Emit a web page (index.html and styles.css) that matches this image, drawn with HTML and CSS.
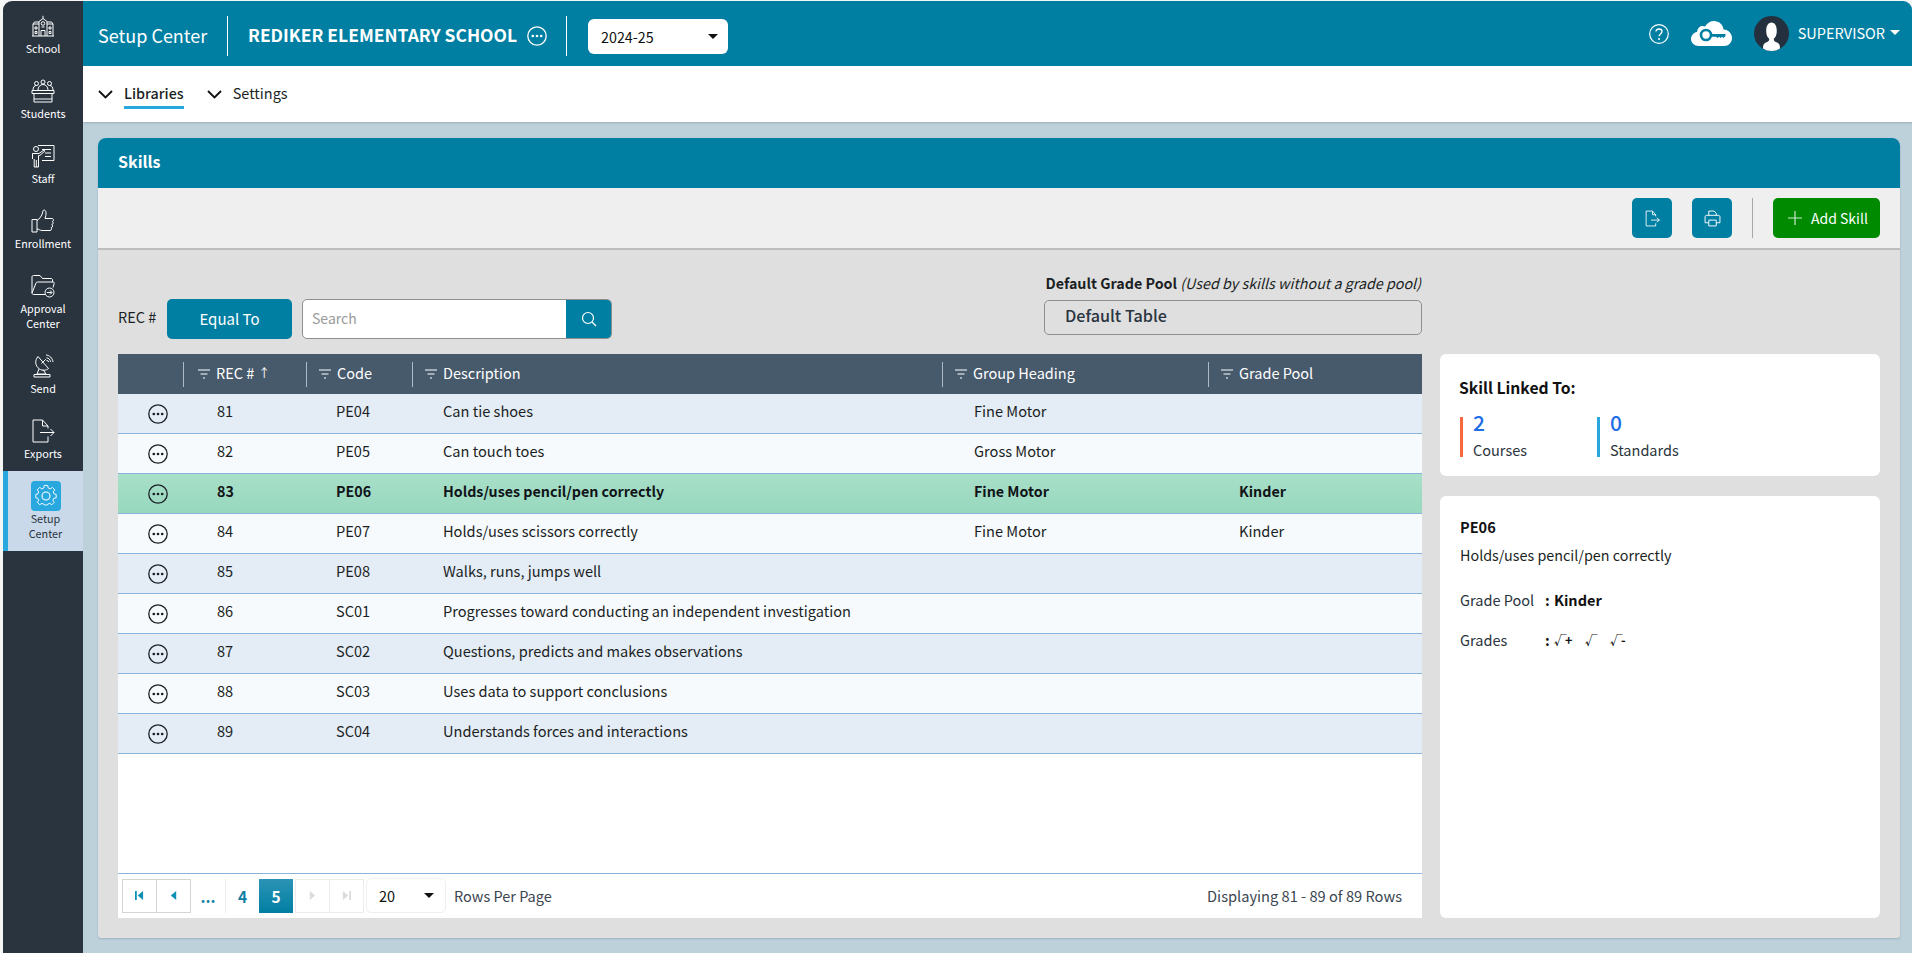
FILE: index.html
```html
<!DOCTYPE html>
<html lang="en">
<head>
<meta charset="utf-8">
<title>Skills - Setup Center</title>
<link rel="stylesheet" href="styles.css">
</head>
<body>
<svg class="defs" width="0" height="0" aria-hidden="true">
  <symbol id="more" viewBox="0 0 20 20">
    <circle cx="10" cy="10" r="9.2" fill="none" stroke="currentColor" stroke-width="1.3"/>
    <circle cx="5.8" cy="10" r="1.35" fill="currentColor"/><circle cx="10" cy="10" r="1.35" fill="currentColor"/><circle cx="14.2" cy="10" r="1.35" fill="currentColor"/>
  </symbol>
  <symbol id="filter" viewBox="0 0 12 10">
    <path d="M0 1h12M2.5 5h7M5 9h2" fill="none" stroke="currentColor" stroke-width="1.2"/>
  </symbol>
</svg>
<div class="app">
  <nav class="rail">
    <a class="rail-item">
      <svg class="rail-icon" viewBox="0 0 24 22"><path d="M1 21h22M8 21V6.5l4-3 4 3V21M12 3.5V.8M8 9H2v12M16 9h6v12M2 9l1.5-2H8M22 9l-1.5-2H16M10 21v-5.5h4V21"/><circle cx="12" cy="8.5" r="1.8"/><path d="M4 12h2v2H4zM4 16.500h2v2H4zM18 12h2v2h-2zM18 16.500h2v2h-2zM10.500 12h3"/></svg>
      <span>School</span>
    </a>
    <a class="rail-item">
      <svg class="rail-icon" viewBox="0 0 24 24"><circle cx="5.500" cy="4.500" r="2"/><circle cx="12" cy="3" r="2"/><circle cx="18.500" cy="4.500" r="2"/><path d="M2 11c0-3 1.500-4.500 3.500-4.500M22 11c0-3-1.500-4.500-3.500-4.500M7 11c0-3 2-5.500 5-5.500s5 2.500 5 5.500"/><path d="M1 11.500h22v3H1zM3 14.500V23h18v-8.500M3 20h18"/></svg>
      <span>Students</span>
    </a>
    <a class="rail-item">
      <svg class="rail-icon" viewBox="0 0 24 24"><path d="M7 1.500h16v15H11M11 5.500h9M14 9h6M14 12.500h6"/><circle cx="5" cy="5" r="2.500"/><path d="M1.500 15V9.500h6.500L13 6l.8 1.100-5 4.400H7.500V23H3.200v-8M5.300 23v-7"/></svg>
      <span>Staff</span>
    </a>
    <a class="rail-item">
      <svg class="rail-icon" viewBox="0 0 24 24"><path d="M1 10.500h5V23H1zM6 11.500c2.500-1.500 5-5 5.500-7.500.3-1.500.5-3 1.500-3 2.500 0 2.500 4.500 1 8.500h7c2 0 2 3 0 3 1.500 0 1.500 3-.3 3 1.300.3 1.300 3-.5 3 .8.500.5 3-1.200 3H11c-2 0-3-1.500-5-1.500"/></svg>
      <span>Enrollment</span>
    </a>
    <a class="rail-item tall">
      <svg class="rail-icon" viewBox="0 0 24 24"><path d="M14 20.500H2.500c-1 0-1.500-.7-1.500-1.500V3c0-1 .6-1.500 1.500-1.500H9l2.500 3H20c1 0 1.500.6 1.500 1.500v2"/><path d="M1 19l4-10c.3-.6.7-1 1.500-1H22c1 0 1.500.7 1.200 1.500l-1.200 4"/><circle cx="18.500" cy="18.500" r="4.500"/><path d="M15.800 18.500h5M19 16.500l2 2-2 2"/></svg>
      <span>Approval<br>Center</span>
    </a>
    <a class="rail-item">
      <svg class="rail-icon" viewBox="0 0 24 24"><path d="M7 2.500c-3.500 4-3 9.500 1.500 12.500 3 2 6.500 1.500 9-.5zM10.500 9.500l4-4M14.500 5.500l1 1M8 15l-2 5h9l-3-4.500M3 20.500h16v2.500H3z"/><path d="M15 1c3.500.2 6.500 3 7 7M15.500 3.800c2.200.2 3.800 1.800 4 4M16 6.500c1 .1 1.500.7 1.700 1.500"/></svg>
      <span>Send</span>
    </a>
    <a class="rail-item">
      <svg class="rail-icon" viewBox="0 0 24 24"><path d="M17 9.500V7l-5.500-6H2v22h15v-5.500M11.500 1v6H17M9 13.500h14M19.500 10l3.500 3.500-3.500 3.500"/></svg>
      <span>Exports</span>
    </a>
    <a class="rail-item active">
      <span class="gear-box">
        <svg class="gear" viewBox="0 0 24 24"><path d="M10 1h4l.6 3 2.300 1 2.600-1.700 2.800 2.800L20.600 8.700l1 2.300 2.400.6v4l-2.900.5-1 2.300 1.600 2.500-2.800 2.800-2.500-1.600-2.300.9-.6 1H10l-.6-1-2.300-.9-2.500 1.600-2.800-2.800 1.600-2.500-1-2.300L0 15.600v-4l2.400-.6 1-2.300L1.700 6.100l2.800-2.800L7.100 5l2.300-1z" transform="translate(1.800 0.600) scale(.85)"/><circle cx="12" cy="12" r="4"/></svg>
      </span>
      <span>Setup<br>Center</span>
    </a>
  </nav>

  <div class="main">
    <header class="topbar">
      <span class="app-name">Setup Center</span>
      <span class="school"><span class="school-name">REDIKER ELEMENTARY SCHOOL</span><svg class="more-top"><use href="#more"/></svg></span>
      <span class="year"><span>2024-25</span><i class="caret"></i></span>
      <span class="top-right">
        <svg class="help" viewBox="0 0 20 20"><circle cx="10" cy="10" r="9.300" fill="none" stroke="#fff" stroke-width="1.200"/><path d="M7 7.600C7 5.800 8.400 5 10 5s3 1 3 2.600c0 2.300-3 2.300-3 4.700" fill="none" stroke="#fff" stroke-width="1.300"/><circle cx="10" cy="15" r="1" fill="#fff"/></svg>
        <svg class="cloud" viewBox="0 0 41 25"><path d="M8 25C3 25 0 21.500 0 18c0-3.500 2.800-6.500 6-7C7 5 11 4 14 5.500 16 2 19.500 0 23 0c5 0 9 3.500 9.500 8.500 5 .2 8.500 4 8.500 8.500 0 4.500-3.500 8-8 8z" fill="#fff"/><circle cx="15" cy="14" r="5" fill="none" stroke="#007fa3" stroke-width="2.600"/><path d="M19.500 13h15v2l-2 2-1.500-1.200-1.500 1.200-1.500-1.200-1.500 1.200-1.500-1.200h-5.500z" fill="#007fa3"/></svg>
        <svg class="avatar" viewBox="0 0 35 35"><circle cx="17.500" cy="17.500" r="17.500" fill="#24303d"/><path d="M9 32.500c0-4 1-5.500 4-6.500 1.800-.7 2.300-1.500 2.200-3.200-1.800-1.500-3-4-3-7.800 0-5 1.800-8.500 5.300-8.500s5.300 3.500 5.300 8.500c0 3.800-1.200 6.300-3 7.800-.1 1.700.4 2.500 2.200 3.200 3 1 4 2.500 4 6.500-2.500 1.700-5.300 2.500-8.500 2.500s-6-.8-8.500-2.500z" fill="#fff"/></svg>
        <span class="user">SUPERVISOR</span><i class="caret white"></i>
      </span>
    </header>

    <div class="subnav">
      <a class="tab current"><svg class="chev" viewBox="0 0 15 9"><path d="M1 1l6.500 6.500L14 1" fill="none" stroke="#111" stroke-width="1.800"/></svg><span class="tab-label">Libraries</span></a>
      <a class="tab"><svg class="chev" viewBox="0 0 15 9"><path d="M1 1l6.500 6.500L14 1" fill="none" stroke="#111" stroke-width="1.800"/></svg><span class="tab-label">Settings</span></a>
    </div>

    <section class="card">
      <h1 class="card-title">Skills</h1>
      <div class="toolbar">
        <button class="tool"><svg viewBox="0 0 16 16"><path d="M11 6V4.500L8 1H2v14h9v-2.500M8 1v3.500h3M6.500 9.500h8M12 7.500l2.500 2-2.500 2" fill="none" stroke="#fff" stroke-width=".8"/></svg></button>
        <button class="tool"><svg viewBox="0 0 16 16"><path d="M4.500 5V1h5l2 2v2M4.500 12H1V6.500C1 5.700 1.500 5 2.500 5h11c1 0 1.500.7 1.500 1.500V12h-3.500M4.500 9.500h7V15h-7z" fill="none" stroke="#fff" stroke-width=".9"/></svg></button>
        <span class="tool-sep"></span>
        <button class="add"><svg viewBox="0 0 14 14"><path d="M7 0v14M0 7h14" stroke="#cfe8cf" stroke-width="1.200"/></svg><span>Add Skill</span></button>
      </div>

      <div class="card-body">
        <div class="filters">
          <span class="filter-label">REC #</span>
          <button class="equal">Equal To</button>
          <span class="search"><span class="search-text">Search</span><span class="search-btn"><svg viewBox="0 0 16 16"><circle cx="7" cy="7" r="5.500" fill="none" stroke="#fff" stroke-width="1.200"/><path d="M11 11l4 4" stroke="#fff" stroke-width="1.200"/></svg></span></span>
          <div class="pool">
            <div class="pool-label"><b>Default Grade Pool</b> <em>(Used by skills without a grade pool)</em></div>
            <div class="pool-box">Default Table</div>
          </div>
        </div>

        <div class="grid">
          <div class="row head">
            <div class="th-first"></div>
            <div class="th col-rec"><svg class="ficon"><use href="#filter"/></svg>REC # <span class="arrow">↑</span></div>
            <div class="th"><svg class="ficon"><use href="#filter"/></svg>Code</div>
            <div class="th"><svg class="ficon"><use href="#filter"/></svg>Description</div>
            <div class="th"><svg class="ficon"><use href="#filter"/></svg>Group Heading</div>
            <div class="th"><svg class="ficon"><use href="#filter"/></svg>Grade Pool</div>
          </div>
          <div class="rows">
            <div class="row item"><div class="td-more"><svg class="more"><use href="#more"/></svg></div><div>81</div><div>PE04</div><div>Can tie shoes</div><div>Fine Motor</div><div></div></div>
            <div class="row item"><div class="td-more"><svg class="more"><use href="#more"/></svg></div><div>82</div><div>PE05</div><div>Can touch toes</div><div>Gross Motor</div><div></div></div>
            <div class="row item selected"><div class="td-more"><svg class="more"><use href="#more"/></svg></div><div>83</div><div>PE06</div><div>Holds/uses pencil/pen correctly</div><div>Fine Motor</div><div>Kinder</div></div>
            <div class="row item"><div class="td-more"><svg class="more"><use href="#more"/></svg></div><div>84</div><div>PE07</div><div>Holds/uses scissors correctly</div><div>Fine Motor</div><div>Kinder</div></div>
            <div class="row item"><div class="td-more"><svg class="more"><use href="#more"/></svg></div><div>85</div><div>PE08</div><div>Walks, runs, jumps well</div><div></div><div></div></div>
            <div class="row item"><div class="td-more"><svg class="more"><use href="#more"/></svg></div><div>86</div><div>SC01</div><div>Progresses toward conducting an independent investigation</div><div></div><div></div></div>
            <div class="row item"><div class="td-more"><svg class="more"><use href="#more"/></svg></div><div>87</div><div>SC02</div><div>Questions, predicts and makes observations</div><div></div><div></div></div>
            <div class="row item"><div class="td-more"><svg class="more"><use href="#more"/></svg></div><div>88</div><div>SC03</div><div>Uses data to support conclusions</div><div></div><div></div></div>
            <div class="row item"><div class="td-more"><svg class="more"><use href="#more"/></svg></div><div>89</div><div>SC04</div><div>Understands forces and interactions</div><div></div><div></div></div>
          </div>
          <div class="pager">
            <span class="pg-group">
              <span class="pg"><svg viewBox="0 0 10 10"><path d="M0 0h2v10H0zM9 0v10L3 5z" fill="#0d8fb8"/></svg></span>
              <span class="pg"><svg viewBox="0 0 10 10"><path d="M8 0v10L2 5z" fill="#0d8fb8"/></svg></span>
            </span>
            <span class="pg-group light pages">
              <span class="pg num">...</span>
              <span class="pg num">4</span>
              <span class="pg num on">5</span>
            </span>
            <span class="pg-group light">
              <span class="pg"><svg viewBox="0 0 10 10"><path d="M2 0v10l6-5z" fill="#dcdcdc"/></svg></span>
              <span class="pg"><svg viewBox="0 0 10 10"><path d="M1 0v10l6-5zM8 0h2v10H8z" fill="#dcdcdc"/></svg></span>
            </span>
            <span class="size"><span>20</span><i class="caret"></i></span>
            <span class="size-label">Rows Per Page</span>
            <span class="count">Displaying 81 - 89 of 89 Rows</span>
          </div>
        </div>

        <aside class="side">
          <div class="panel linked">
            <h2 class="linked-title">Skill Linked To:</h2>
            <div class="stats">
              <div class="stat orange"><strong>2</strong><span>Courses</span></div>
              <div class="stat blue"><strong>0</strong><span>Standards</span></div>
            </div>
          </div>
          <div class="panel detail">
            <div class="detail-code">PE06</div>
            <div class="detail-desc">Holds/uses pencil/pen correctly</div>
            <div class="kv"><span class="k">Grade Pool</span><span class="colon">:</span><b>Kinder</b></div>
            <div class="kv"><span class="k">Grades</span><span class="colon">:</span><span class="grades"><b>√+</b><b>√</b><b>√-</b></span></div>
          </div>
        </aside>
      </div>
    </section>
  </div>
</div>
</body>
</html>
```

FILE: styles.css
```css
* { box-sizing: border-box; }
html, body { margin: 0; height: 100%; }
body {
  background: #f6f6f6;
  font-family: "Noto Sans CJK SC", "Noto Sans", sans-serif;
  font-size: 15px;
  line-height: 20px;
  color: #1b1f24;
  overflow: hidden;
}
.defs { position: absolute; }
.app { display: flex; height: 952px; margin: 1px 0 0 3px; }

/* left rail */
.rail { width: 80px; flex: none; background: #29343f; border-top-left-radius: 9px; color: #fff; }
.rail-item { display: flex; flex-direction: column; align-items: center; height: 65px; padding-top: 13px; font-size: 10.800px; line-height: 15px; text-align: center; }
.rail-item.tall { height: 80px; }
.rail-icon { width: 24px; height: 24px; fill: none; stroke: #fff; stroke-width: 1; margin-bottom: 3px; }
.rail-item.active { height: 80px; padding-top: 10px; background: #c9d9ea; border-left: 5px solid #29a8df; color: #29343f; }
.gear-box { width: 30px; height: 30px; background: #29a8df; border-radius: 4px; display: flex; align-items: center; justify-content: center; }
.gear { width: 24px; height: 24px; fill: none; stroke: #fff; stroke-width: 1.100; }

.main { flex: 1; min-width: 0; display: flex; flex-direction: column; background: #bdd1db; border-top-right-radius: 9px; overflow: hidden; }

/* top bar */
.topbar { height: 65px; flex: none; background: #007fa3; color: #fff; display: flex; align-items: center; padding-left: 15px; }
.app-name { font-size: 18px; width: 130px; height: 40px; line-height: 38px; border-right: 1px solid #fff; margin-top: 4px; }
.school { display: flex; align-items: center; height: 40px; padding: 0 19px 0 20px; border-right: 1px solid #fff; margin-top: 4px; }
.school-name { font-size: 17.450px; font-weight: 700; line-height: 38px; height: 40px; white-space: nowrap; }
.more-top { width: 20px; height: 20px; margin-left: 10px; color: #fff; margin-top: 1px; }
.year { width: 140px; height: 35px; margin-left: 21px; margin-top: 6px; padding: 0 10px 0 13px; background: #fff; border-radius: 6px; color: #111; display: flex; align-items: center; justify-content: space-between; font-size: 14.300px; }
.caret { display: block; width: 0; height: 0; border-left: 5px solid transparent; border-right: 5px solid transparent; border-top: 5px solid #111; }
.caret.white { border-top-color: #fff; }
.top-right { margin-left: auto; display: flex; align-items: center; padding-right: 12px; }
.help { width: 20px; height: 20px; }
.cloud { width: 41px; height: 25px; margin-left: 22px; }
.avatar { width: 35px; height: 35px; margin-left: 22px; margin-top: -1px; }
.user { margin-left: 9px; margin-right: 5px; font-size: 14.500px; margin-top: -2px; }
.top-right .caret { margin-top: -2px; }

/* sub navigation */
.subnav { height: 56px; flex: none; background: #fff; display: flex; align-items: center; padding-left: 15px; gap: 23px; box-shadow: 0 1px 2px rgba(80, 110, 125, .35); }
.tab { display: flex; align-items: center; gap: 11px; color: #1b1f24; font-size: 14.500px; }
.chev { width: 15px; height: 9px; }
.tab-label { height: 28px; line-height: 24px; margin-top: 2px; }
.tab.current .tab-label { font-weight: 500; font-size: 14.300px; border-bottom: 3px solid #29a8df; }

/* card */
.card { flex: 1; min-height: 0; margin: 16px 12px 15px 15px; background: #dfdfdf; border-radius: 8px 8px 3px 3px; display: flex; flex-direction: column; overflow: hidden; box-shadow: 0 1px 2px rgba(80, 110, 125, .3); }
.card-title { margin: 0; height: 50px; flex: none; background: #007fa3; color: #fff; font-size: 16px; font-weight: 700; line-height: 47px; padding-left: 20px; }
.toolbar { height: 62px; flex: none; background: #efefef; border-bottom: 2px solid #bdbdbd; display: flex; align-items: flex-start; justify-content: flex-end; padding: 10px 20px 0 0; }
.tool { width: 40px; height: 40px; border: 0; padding: 0; border-radius: 5px; background: #007fa3; margin-left: 20px; display: flex; align-items: center; justify-content: center; }
.tool svg { width: 17px; height: 17px; }
.tool-sep { width: 1px; height: 40px; background: #a8a8a8; margin: 0 20px; }
.add { width: 107px; height: 40px; border: 0; border-radius: 5px; background: #008a00; color: #fff; font: 400 14px/20px "Noto Sans CJK SC", sans-serif; display: flex; align-items: center; padding: 0 0 0 15px; gap: 9px; }
.add svg { width: 14px; height: 14px; }

.card-body { flex: 1; min-height: 0; display: grid; grid-template-columns: 1304px 440px; grid-template-rows: 104px 564px; column-gap: 18px; padding: 0 20px; }

/* filter row */
.filters { grid-column: 1; grid-row: 1; display: flex; align-items: flex-end; padding-bottom: 15px; }
.filter-label { font-size: 14.500px; line-height: 40px; width: 49px; height: 42px; }
.equal { width: 125px; height: 40px; border: 0; padding: 0; border-radius: 5px; background: #007fa3; color: #fff; font: 400 15px/20px "Noto Sans CJK SC", sans-serif; }
.search { width: 310px; height: 40px; margin-left: 10px; display: flex; background: #fff; border: 1px solid #8f8f8f; border-radius: 5px; overflow: hidden; }
.search-text { flex: 1; padding-left: 9px; color: #9a9a9a; font-size: 14px; line-height: 36px; }
.search-btn { width: 46px; margin: -1px -1px -1px 0; background: #007fa3; display: flex; align-items: center; justify-content: center; }
.search-btn svg { width: 16px; height: 16px; }
.pool { margin-left: auto; width: 378px; margin-bottom: 4px; }
.pool-label { font-size: 14.300px; line-height: 20px; text-align: right; white-space: nowrap; margin-bottom: 7px; margin-right: 1px; }
.pool-label b { font-weight: 700; }
.pool-label em { font-style: italic; }
.pool-box { height: 35px; border: 1px solid #8f8f8f; border-radius: 5px; padding-left: 20px; font-size: 16.200px; font-weight: 500; line-height: 29px; color: #29343f; }

/* table */
.grid { grid-column: 1; grid-row: 2; background: #fff; display: flex; flex-direction: column; }
.row { display: grid; grid-template-columns: 65px 123px 106px 530px 266px 214px; align-items: center; }
.head { height: 40px; flex: none; background: #475a6c; color: #fff; font-size: 14.500px; }
.th { display: flex; align-items: center; height: 25px; border-left: 1px solid #aebbc6; padding: 0 0 3px 12px; white-space: nowrap; line-height: 20px; }
.col-rec { padding-left: 14px; }
.ficon { width: 12px; height: 10px; margin-right: 6px; color: #fff; flex: none; margin-top: 3px; }
.arrow { font-size: 12px; margin-left: 4px; }
.rows { flex: 1; min-height: 0; }
.item { height: 40px; border-bottom: 1px solid #8ab4dc; background: #f7fafd; font-size: 14.600px; }
.item:nth-child(odd) { background: #e4ecf6; }
.item > div { padding-left: 31px; white-space: nowrap; line-height: 20px; margin-top: -5px; }
.item > div:nth-child(2) { padding-left: 34px; }
.item > div:nth-child(3) { padding-left: 30px; }
.item > div:nth-child(5) { padding-left: 32px; }
.item > .td-more { padding-left: 30px; margin-top: 0; display: flex; }
.more { width: 20px; height: 20px; color: #1b1f24; }
.item.selected { background: linear-gradient(#a9dfc8, #96d8be); font-weight: 700; font-size: 14.250px; color: #101418; }

/* pager */
.pager { height: 45px; flex: none; border-top: 1px solid #8ab4dc; display: flex; align-items: center; padding: 0 20px 1px 4px; }
.pg-group { display: flex; height: 34px; border: 1px solid #d4d4d4; }
.pg-group.light { border-color: #ececec; margin-left: 2px; }
.pg-group.pages { border-width: 0; margin-left: 0; margin-right: 0; }
.pg { width: 34px; display: flex; align-items: center; justify-content: center; border-left: 1px solid #d4d4d4; font-weight: 700; color: #0d7fa5; font-size: 15.500px; }
.pg:first-child { border-left: 0; width: 33px; }
.pages .pg:first-child { width: 34px; }
.light .pg { border-left-color: #ececec; }
.pg svg { width: 9px; height: 9px; }
.pg.on { background: linear-gradient(#2c93b5, #007fa3); color: #fff; border-left: 0; }
.size { width: 80px; height: 35px; margin-left: 2px; border: 1px solid #efefef; border-radius: 5px; display: flex; align-items: center; justify-content: space-between; padding: 0 11px 0 12px; font-size: 14.500px; color: #111; }
.size-label { margin-left: 8px; font-size: 14.500px; color: #3b4650; }
.count { margin-left: auto; font-size: 14.650px; color: #3b4650; }

/* side panels */
.side { grid-column: 2; grid-row: 2; display: flex; flex-direction: column; gap: 20px; }
.panel { background: #fff; border-radius: 6px; padding-left: 20px; }
.linked { height: 122px; padding-top: 22px; }
.linked-title { margin: 0 0 17px -1px; font-size: 15.700px; font-weight: 700; line-height: 24px; color: #111; }
.stats { display: flex; }
.stat { width: 137px; height: 40px; padding-left: 10px; border-left: 3px solid; display: flex; flex-direction: column; }
.stat.orange { border-color: #f5693d; }
.stat.blue { border-color: #29a8df; }
.stat strong { font-size: 21px; font-weight: 500; line-height: 20px; color: #1f6fe8; margin-top: -5px; }
.stat span { font-size: 14.500px; line-height: 20px; margin-top: 8px; color: #2b343c; }
.detail { flex: 1; padding-top: 21px; }
.detail-code { font-weight: 700; font-size: 14.500px; color: #111; }
.detail-desc { margin-top: 8px; font-size: 14.350px; color: #1b1f24; }
.kv { display: flex; margin-top: 20px; font-size: 14.500px; color: #2b343c; }
.detail-desc + .kv { margin-top: 25px; }
.k { width: 85px; }
.colon { width: 9px; font-weight: 700; color: #111; }
.kv b { color: #111; font-weight: 700; }
.grades { display: flex; gap: 14px; }
.grades b { font-size: 12.500px; letter-spacing: -1.500px; }
```
